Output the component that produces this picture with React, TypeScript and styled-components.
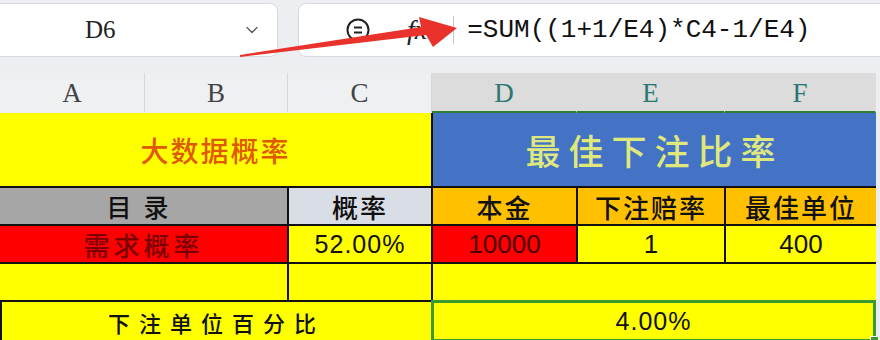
import React from 'react'
import styled, { createGlobalStyle } from 'styled-components'
import { ChevronDown } from 'lucide-react'

const GlobalStyle = createGlobalStyle`
  html, body {
    margin: 0;
    padding: 0;
    background: #eceef1;
    overflow: hidden;
  }
`

const CJK = `"Noto Sans CJK SC", "Noto Sans", sans-serif`
const MONO = `"Liberation Mono", "DejaVu Sans Mono", monospace`
const SERIF = `"Liberation Serif", "DejaVu Serif", serif`

const Page = styled.div`
  position: relative;
  width: 880px;
  height: 340px;
  overflow: hidden;
`

const TopBar = styled.div`
  display: flex;
  gap: 20px;
  padding-top: 3px;
  height: 54px;
  margin-bottom: 16px;
`

const NameBox = styled.div`
  display: flex;
  align-items: center;
  width: 288px;
  margin-left: -10px;
  padding-left: 94px;
  padding-right: 15px;
  box-sizing: border-box;
  background: #fff;
  border: 1px solid #d6d9de;
  border-radius: 8px;
  font-family: ${SERIF};
  font-size: 25px;
  color: #222;
`

const Chevron = styled(ChevronDown)`
  margin-left: auto;
  color: #555;
`

const FormulaBox = styled.div`
  flex: 1;
  margin-right: -10px;
  display: flex;
  align-items: center;
  padding-left: 46px;
  background: #fff;
  border: 1px solid #d6d9de;
  border-radius: 8px;
`

const Fx = styled.span`
  margin-left: 36px;
  font-family: ${SERIF};
  font-style: italic;
  font-size: 28px;
  color: #222;
`

const Divider = styled.span`
  width: 1px;
  height: 28px;
  margin-left: 26px;
  background: #c4c7cc;
`

const Formula = styled.span`
  margin-left: 13px;
  font-family: ${MONO};
  font-size: 26px;
  color: #111;
  white-space: pre;
`

const HeaderRow = styled.div`
  display: grid;
  grid-template-columns: 145px 143px 144px 145px 148px 151px;
  height: 40px;
`

const ColHead = styled.div<{ $sel?: boolean }>`
  display: flex;
  align-items: center;
  justify-content: center;
  box-sizing: border-box;
  padding-top: 2px;
  background: ${p => (p.$sel ? '#dcdcdc' : '#eff0f2')};
  border-right: 1px solid ${p => (p.$sel ? '#dcdcdc' : '#d6d8db')};
  border-bottom: 2px solid ${p => (p.$sel ? '#2e7d32' : '#eff0f2')};
  font-family: ${SERIF};
  font-size: 27px;
  color: ${p => (p.$sel ? '#2a7873' : '#444')};
`

const Grid = styled.div`
  display: grid;
  grid-template-columns: 144px 141px 142px 143px 146px 150px;
  grid-template-rows: 73px 36px 36px 36px 40px;
  column-gap: 2px;
  row-gap: 2px;
  width: 876px;
  background: #111;
`

const Cell = styled.div<{
  $span?: number
  $bg: string
  $color?: string
  $size?: number
  $spacing?: number
  $latin?: boolean
  $edge?: boolean
  $picked?: boolean
}>`
  position: relative;
  grid-column: span ${p => p.$span ?? 1};
  display: flex;
  align-items: center;
  justify-content: center;
  box-sizing: border-box;
  background: ${p => p.$bg};
  color: ${p => p.$color ?? '#111'};
  font-family: ${p => (p.$latin ? `"Liberation Sans", Arial, sans-serif` : CJK)};
  font-weight: ${p => (p.$latin ? 400 : 500)};
  font-size: ${p => p.$size ?? 24}px;
  letter-spacing: ${p => p.$spacing ?? 0}px;
  ${p => (p.$edge ? 'border-left: 2px solid #111;' : '')}
  ${p => (p.$picked ? 'box-shadow: inset 0 0 0 3px #3b9a2f; margin: -2px 0 0 -2px;' : '')}
`

const Handle = styled.span`
  position: absolute;
  right: -3px;
  bottom: -3px;
  width: 7px;
  height: 7px;
  background: #3b9a2f;
  border: 1px solid #fff;
`

const Arrow = styled.svg`
  position: absolute;
  left: 0;
  top: 0;
  pointer-events: none;
`

const EqIcon = () => (
  <svg width="26" height="26" viewBox="0 0 26 26" fill="none" stroke="#222" strokeWidth="2">
    <circle cx="13" cy="13" r="10.5" />
    <path d="M9 10.5H17M9 15.5H17" />
  </svg>
)

export default function App() {
  return (
    <Page>
      <GlobalStyle />
      <TopBar>
        <NameBox>
          D6
          <Chevron size={20} strokeWidth={1.5} />
        </NameBox>
        <FormulaBox>
          <EqIcon />
          <Fx>fx</Fx>
          <Divider />
          <Formula>=SUM((1+1/E4)*C4-1/E4)</Formula>
        </FormulaBox>
      </TopBar>

      <HeaderRow>
        <ColHead>A</ColHead>
        <ColHead>B</ColHead>
        <ColHead>C</ColHead>
        <ColHead $sel>D</ColHead>
        <ColHead $sel>E</ColHead>
        <ColHead $sel>F</ColHead>
      </HeaderRow>

      <Grid>
        <Cell $span={3} $bg="#ffff00" $color="#e05800" $size={28} $spacing={2}>大数据概率</Cell>
        <Cell $span={3} $bg="#4472c4" $color="#dfe87c" $size={35} $spacing={8}>最佳下注比率</Cell>

        <Cell $span={2} $bg="#a6a6a6" $size={25} $spacing={12}>目录</Cell>
        <Cell $bg="#d9dde5" $size={26} $spacing={2}>概率</Cell>
        <Cell $bg="#ffc000" $size={26} $spacing={2}>本金</Cell>
        <Cell $bg="#ffc000" $size={26} $spacing={2}>下注赔率</Cell>
        <Cell $bg="#ffc000" $size={26} $spacing={2}>最佳单位</Cell>

        <Cell $span={2} $bg="#ff0000" $color="#7a0000" $size={26} $spacing={4}>需求概率</Cell>
        <Cell $bg="#ffff00" $latin $size={25} $spacing={1}>52.00%</Cell>
        <Cell $bg="#ff0000" $color="#4a0000" $latin $size={26}>10000</Cell>
        <Cell $bg="#ffff00" $latin $size={26}>1</Cell>
        <Cell $bg="#ffff00" $latin $size={26}>400</Cell>

        <Cell $span={2} $bg="#ffff00" />
        <Cell $bg="#ffff00" />
        <Cell $span={3} $bg="#ffff00" />

        <Cell $span={3} $bg="#ffff00" $edge $size={22} $spacing={9}>下注单位百分比</Cell>
        <Cell $span={3} $bg="#ffff00" $latin $size={25} $spacing={1} $picked>
          4.00%
          <Handle />
        </Cell>
      </Grid>

      <Arrow width="880" height="80" viewBox="0 0 880 80">
        <polygon
          points="240,57 240,55 421,27 419,17 457,28 433,47 426,35"
          fill="#e8322b"
        />
      </Arrow>
    </Page>
  )
}
